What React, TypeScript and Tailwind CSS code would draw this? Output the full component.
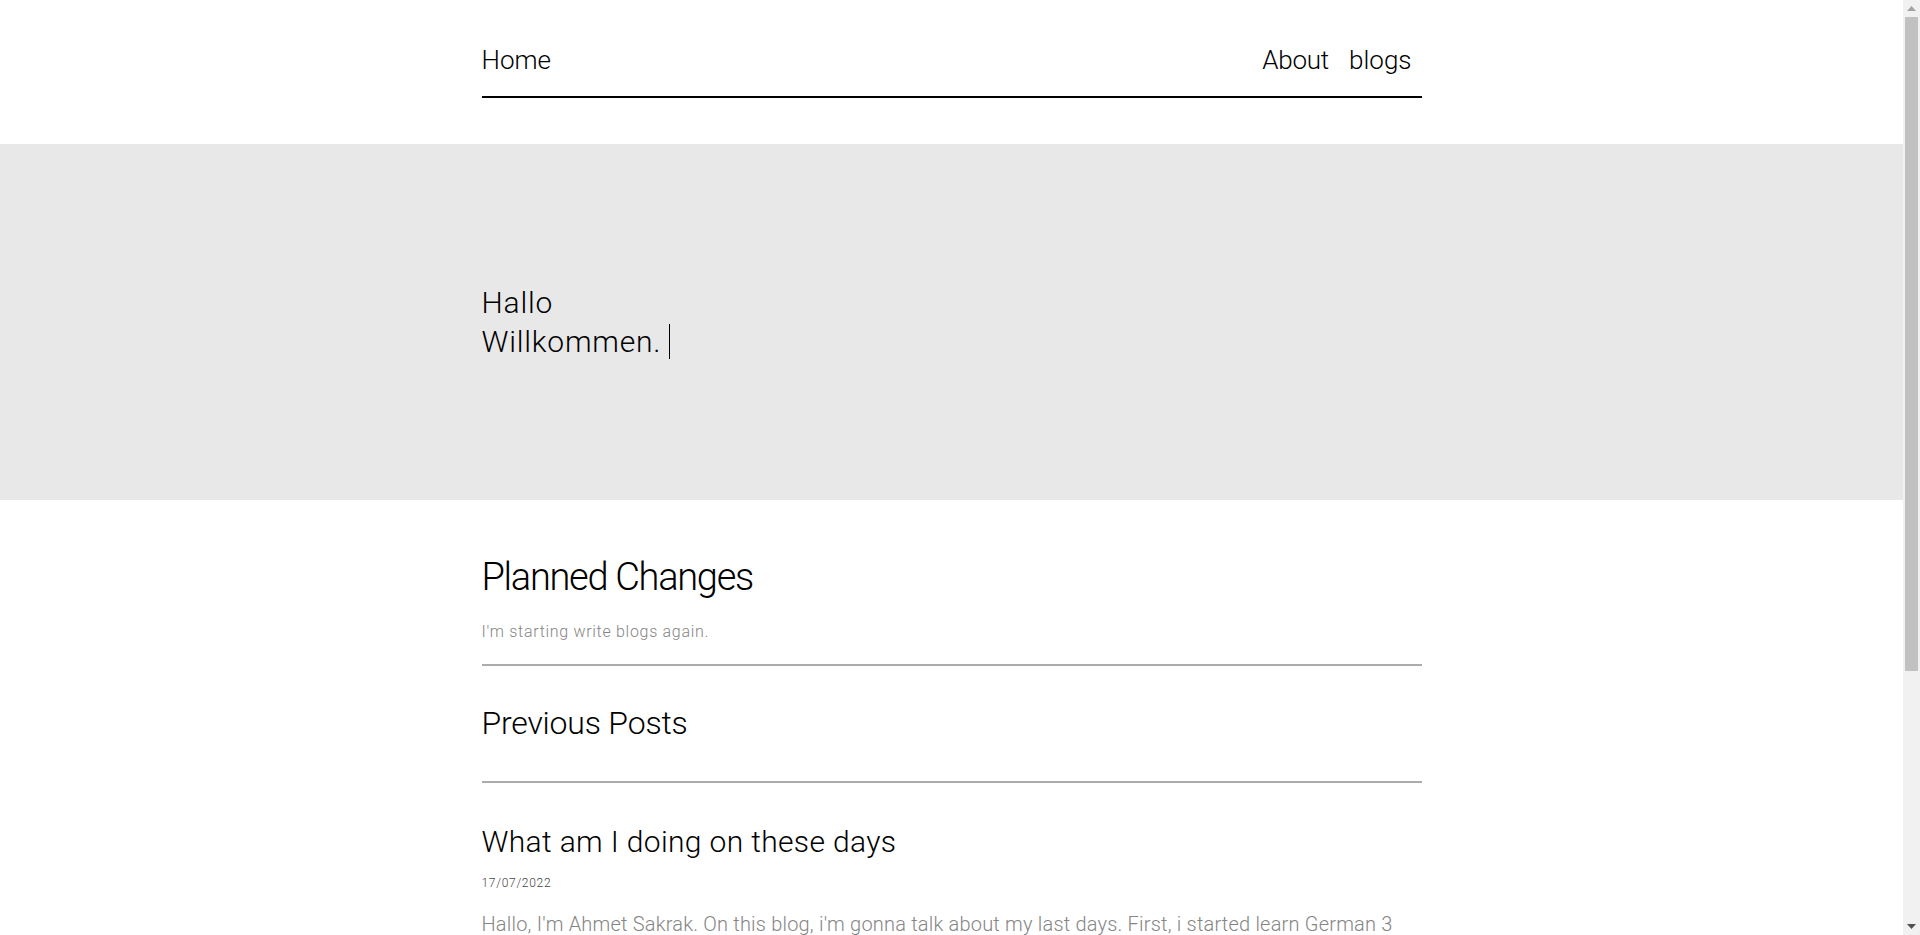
// Kişisel blog ana sayfası: nav, hero, planlanan değişiklikler ve önceki yazılar.
const FONT = { fontFamily: 'Roboto, "Liberation Sans", sans-serif' };

interface Post {
  id: number;
  title: string;
  date: string;
  excerpt: string;
}

const POSTS: Post[] = [
  {
    id: 1,
    title: 'What am I doing on these days',
    date: '17/07/2022',
    excerpt:
      "Hallo, I'm Ahmet Sakrak. On this blog, i'm gonna talk about my last days. First, i started learn German 3 months ago and i'm still learning. Also i'm working on some web projects with React and i want to share what i learned here.",
  },
];

function Nav() {
  return (
    <nav className="mx-auto w-[940px] pt-[45px]">
      <div className="flex items-center justify-between border-b-2 border-black pb-[21px] text-[26px] leading-[30px] font-light text-black">
        <a href="#">Home</a>
        <div className="flex gap-[20px] pr-[10px]">
          <a href="#" className="tracking-[-0.2px]">About</a>
          <a href="#">blogs</a>
        </div>
      </div>
    </nav>
  );
}

function Hero() {
  return (
    <section className="mt-[46px] flex h-[356px] items-center bg-[#e8e8e8]">
      <div className="mx-auto w-[940px] text-[30px] leading-[39px] font-light tracking-[0.8px] text-black">
        <div>Hallo</div>
        <div>
          <span className="border-r border-black pr-[8px]">Willkommen.</span>
        </div>
      </div>
    </section>
  );
}

// Tarayıcının kaydırma çubuğu (referansta görünen klasik stil)
function ScrollBar() {
  return (
    <div className="sticky top-0 flex h-screen w-[17px] shrink-0 flex-col bg-[#f1f1f1]">
      <div className="flex h-[17px] items-center justify-center">
        <svg width="9" height="5" viewBox="0 0 9 5">
          <path d="M4.5 0 L9 5 L0 5 Z" fill="#a3a3a3" />
        </svg>
      </div>
      <div className="px-[2px]">
        <div className="h-[654px] bg-[#c1c1c1]" />
      </div>
      <div className="flex-1" />
      <div className="flex h-[17px] items-center justify-center">
        <svg width="9" height="5" viewBox="0 0 9 5">
          <path d="M0 0 L9 0 L4.5 5 Z" fill="#505050" />
        </svg>
      </div>
    </div>
  );
}

export default function App() {
  return (
    <div className="flex bg-white" style={FONT}>
      <div className="min-w-0 flex-1">
        <Nav />
        <Hero />

        <main className="mx-auto w-[940px] pb-[250px]">
          <section className="border-b-2 border-[#acacac] pt-[54px] pb-[20px]">
            <h2 className="text-[38px] leading-[46px] font-light tracking-[-1.3px] text-black">Planned Changes</h2>
            <p className="mt-[20px] text-[16px] leading-[24px] font-light tracking-[0.7px] text-[#858585]">
              I'm starting write blogs again.
            </p>
          </section>

          <section className="border-b-2 border-[#acacac] pt-[37px] pb-[38px]">
            <h2 className="text-[32px] leading-[40px] font-light tracking-[-0.2px] text-black">Previous Posts</h2>
          </section>

          {POSTS.map((post) => (
            <article key={post.id} className="pt-[40px]">
              <h3 className="text-[30px] leading-[38px] font-light tracking-[0.35px] text-black">{post.title}</h3>
              <p className="mt-[14px] text-[12px] leading-[16px] font-light tracking-[0.7px] text-[#444]">{post.date}</p>
              <p className="mt-[17px] text-[20px] leading-[32px] font-light tracking-[0.2px] text-[#858585]">
                {post.excerpt}
              </p>
            </article>
          ))}
        </main>
      </div>
      <ScrollBar />
    </div>
  );
}
